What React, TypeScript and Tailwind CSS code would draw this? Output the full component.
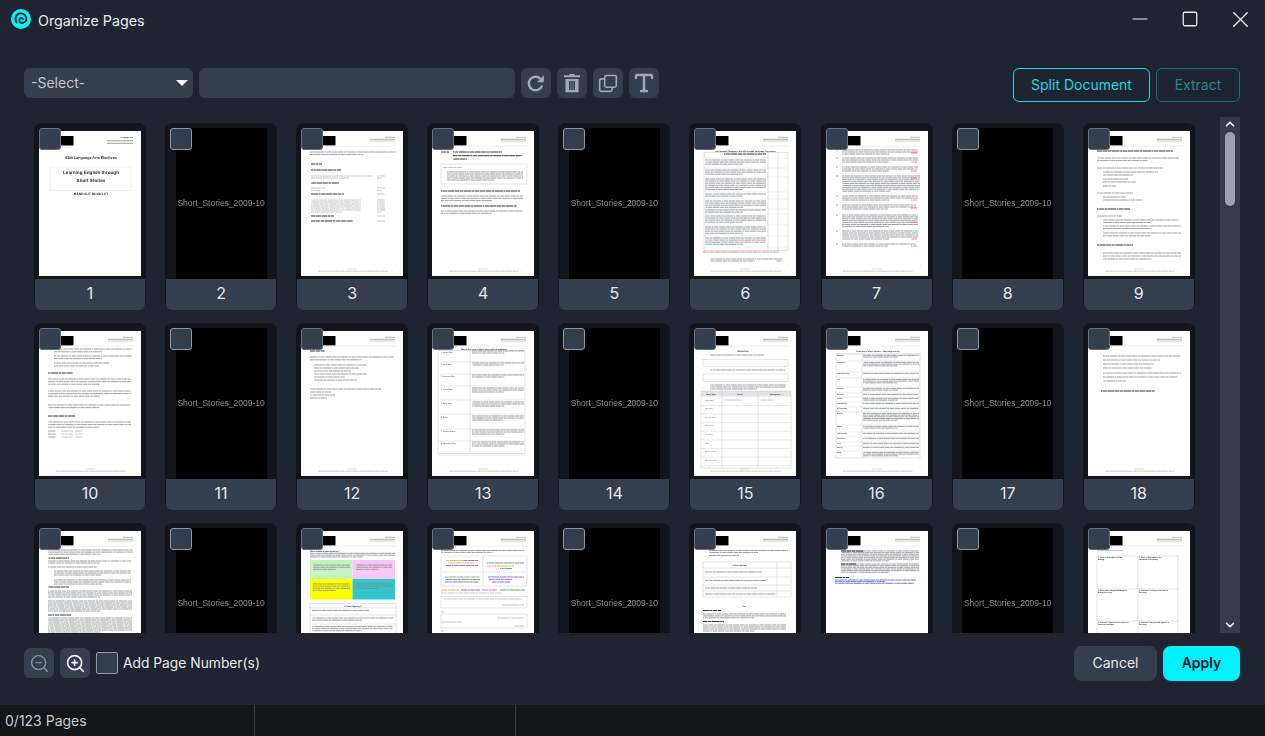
import { ReactNode } from "react";
import { ChevronDown, ChevronUp, Minus, Square, Type, X, ZoomIn, ZoomOut } from "lucide-react";

// greeked text lines for the page thumbnails, k: n normal, b bold, s small, r red
const STROKES: Record<string, [string, number]> = {
  n: ["#85878c", 0.78],
  b: ["#2b2d31", 0.95],
  s: ["#a3a6ab", 0.65],
  r: ["#d9534f", 0.7],
  o: ["#e59a3c", 0.8],
  v: ["#8a4fd0", 0.8],
  g: ["#3f9a4a", 0.8],
  u: ["#4a62c9", 0.8],
  k: ["#d848c8", 0.8],
};

function l(y: number, a: number, b: number, k = "n") {
  const [color, width] = STROKES[k];
  return (
    <line
      x1={a}
      x2={b}
      y1={y}
      y2={y}
      stroke={color}
      strokeWidth={width}
      strokeDasharray="5 .5 3 .5 8 .5 2 .5 4.5 .5 6 .5"
      strokeDashoffset={(y * 7.3) % 30}
    />
  );
}

function p(y: number, a: number, b: number, n: number, step = 2.2, k = "n") {
  return Array.from({ length: n }, (_, i) => <g key={i}>{l(y + i * step, a, i === n - 1 && n > 1 ? a + (b - a) * 0.62 : b, k)}</g>);
}

function box(x: number, y: number, w: number, h: number, stroke = "#c8cacd", fill = "none") {
  return <rect x={x} y={y} width={w} height={h} fill={fill} stroke={stroke} strokeWidth={0.5} />;
}

function t(x: number, y: number, text: string, size = 2.2, weight = 400, anchor: "start" | "middle" | "end" = "start", color = "#2c2e32") {
  return (
    <text x={x} y={y} fontSize={size} fontWeight={weight} textAnchor={anchor} fill={color} fontFamily="'Liberation Sans', sans-serif" textRendering="geometricPrecision">
      {text}
    </text>
  );
}

function head() {
  return (
    <>
      <rect x={22} y={5} width={12.5} height={9.5} fill="#000" />
      <line x1={84} x2={94} y1={6.3} y2={6.3} stroke="#8b8d91" strokeWidth={0.6} />
      <line x1={69} x2={94} y1={8.3} y2={8.3} stroke="#8b8d91" strokeWidth={0.7} />
      <line x1={69} x2={94} y1={10} y2={10} stroke="#a3a6ab" strokeWidth={0.6} />
      <line x1={9} x2={95} y1={15} y2={15} stroke="#e2e3e5" strokeWidth={0.6} />
    </>
  );
}

function foot() {
  return (
    <>
      <line x1={46} x2={56} y1={138} y2={138} stroke="#b5b7ba" strokeWidth={0.5} />
      <line x1={17} x2={87} y1={140.2} y2={140.2} stroke="#a3a6ab" strokeWidth={0.6} strokeDasharray="3 .4 2 .4" />
      <line x1={94} x2={95} y1={135} y2={135} stroke="#c8cacd" strokeWidth={0.6} />
    </>
  );
}

const BOOK_PAGE = (
  <>
    <rect x={22} y={5} width={12.5} height={9.5} fill="#000" />
    {t(94, 7, "Language Arts", 1.8, 700, "end")}
    <line x1={68} x2={94} y1={9.8} y2={9.8} stroke="#6f7175" strokeWidth={0.7} />
    <line x1={68} x2={94} y1={12.3} y2={12.3} stroke="#6f7175" strokeWidth={0.7} />
    {t(52, 28.3, "EDB Language Arts Electives", 3.7, 700, "middle")}
    {box(11, 36, 81, 23.5, "#dcdde0")}
    {t(52, 42.5, "Learning English through", 4.6, 700, "middle")}
    {t(52, 50.5, "Short Stories", 4.6, 700, "middle")}
    {t(52, 63.8, "HANDOUT BOOKLET", 3.4, 700, "middle")}
  </>
);

const CONTENTS = (
  <>
    {head()}
    {p(21, 9, 95, 2, 2.4)}
    {l(33, 10, 21, "b")}
    {l(39, 10, 40, "b")}
    {p(45, 10, 72, 2, 2, "s")}
    {p(45, 76, 84, 2, 2, "s")}
    {l(52, 10, 38, "b")}
    {p(57, 10, 25, 2, 2.6, "s")}
    {p(57, 76, 84, 2, 2.6, "s")}
    {l(63, 10, 43, "b")}
    {l(63, 76, 84, "s")}
    {p(69, 10, 60, 7, 2, "s")}
    {p(69, 76, 84, 7, 2, "s")}
    {l(85, 10, 33, "b")}
    {l(85, 76, 84, "s")}
    {l(90, 10, 52, "b")}
    {l(90, 76, 84, "s")}
    {foot()}
  </>
);

const PART_ONE = (
  <>
    {head()}
    {l(21, 9, 17, "b")}
    {l(21, 21, 70, "b")}
    {l(24.7, 21, 90, "b")}
    {l(28, 21, 35, "b")}
    {box(9, 33, 86, 20)}
    {l(36.5, 11, 30, "s")}
    {p(41, 15, 91, 5, 2)}
    {l(60, 9, 88, "b")}
    {p(65, 9, 91, 3, 2.3)}
    {l(75, 9, 85, "b")}
    {p(80, 9, 91, 2, 2.3)}
    {foot()}
  </>
);

const CURRICULUM = (
  <>
    {head()}
    {t(51, 20.6, "The Personal Changes in the NSS English Language Curriculum", 2, 700, "middle")}
    {box(10, 21.5, 84, 98)}
    <line x1={74} x2={74} y1={21.5} y2={119.5} stroke="#c8cacd" strokeWidth={0.5} />
    <line x1={84} x2={84} y1={21.5} y2={119.5} stroke="#c8cacd" strokeWidth={0.5} />
    {[27, 37, 46, 61, 68, 78, 83, 94, 105, 116].map((y) => (
      <line key={y} x1={10} x2={94} y1={y} y2={y} stroke="#d2d4d7" strokeWidth={0.4} />
    ))}
    {l(23, 30, 72, "b")}
    {p(29, 11, 72, 3, 2.1)}
    {p(39, 11, 72, 3, 2.1)}
    {p(48, 11, 72, 6, 2.1)}
    {p(63, 11, 72, 2, 2.1)}
    {p(70, 11, 72, 4, 2.1)}
    {p(79, 11, 72, 2, 2.1)}
    {p(85, 11, 72, 4, 2.1)}
    {p(96, 11, 72, 4, 2.1)}
    {p(107, 11, 72, 4, 2.1)}
    {l(121, 9, 85, "r")}
    {p(128, 16, 88, 2, 2)}
    {l(130, 82, 88, "r")}
    {foot()}
  </>
);

const NUMBERED = (
  <>
    {head()}
    {[19, 27, 36, 45, 65, 74, 84, 100, 113].map((y) => (
      <g key={y}>{l(y, 10, 12)}</g>
    ))}
    {p(19, 16, 92, 3, 2)}
    {p(27, 16, 92, 3, 2)}
    {p(36, 16, 92, 3, 2)}
    {p(45, 16, 94, 9, 1.9)}
    {p(65, 16, 92, 3, 2)}
    {p(74, 16, 90, 3, 2)}
    {p(84, 16, 92, 7, 1.9)}
    {p(100, 16, 92, 5, 2)}
    {p(113, 16, 90, 2, 2)}
    {[22, 31, 40, 47, 69, 77, 91, 108, 115].map((y) => (
      <g key={y}>{l(y, 85, 91, "r")}</g>
    ))}
    {foot()}
  </>
);

const OBJECTIVES = (
  <>
    {head()}
    {l(20, 9, 85, "b")}
    {p(27, 9, 91, 2, 2.6)}
    {l(37, 9, 75)}
    {p(41, 15, 70, 1)}
    {l(44, 15, 45)}
    {l(48, 15, 40)}
    {l(51, 15, 48)}
    {l(55, 15, 28)}
    {l(62, 9, 45)}
    {l(66, 15, 38)}
    {l(69, 15, 55)}
    {l(78, 9, 42, "b")}
    {l(85, 9, 34)}
    {p(89, 15, 91, 2, 2.5)}
    {p(95, 15, 93, 2, 2.5)}
    {p(102, 15, 93, 2, 2.8)}
    {l(114, 9, 45, "b")}
    {p(122, 15, 93, 3, 3)}
    {foot()}
  </>
);

const CONTENT_MODULE = (
  <>
    {head()}
    {p(18, 15, 93, 2, 2.8)}
    {p(25, 15, 93, 2, 2.6)}
    {l(32, 15, 70)}
    {l(35, 15, 60)}
    {l(42, 9, 34, "b")}
    {p(48, 9, 92, 3, 2.6)}
    {p(60, 9, 92, 3, 2.6)}
    {p(74, 9, 92, 2, 2.6)}
    {l(85, 9, 36, "b")}
    {p(91, 9, 92, 3, 2.6)}
    {[100, 103, 106].map((y) => (
      <g key={y}>
        {l(y, 9, 17)}
        {l(y, 22, 34, "s")}
        {l(y, 36, 44, "s")}
      </g>
    ))}
    {foot()}
  </>
);

const ASSESSMENT = (
  <>
    {head()}
    {l(20, 9, 24, "b")}
    {p(26, 9, 93, 2, 2.8)}
    {[34, 37, 40, 43, 46, 49].map((y, i) => (
      <g key={y}>{l(y, 13, [65, 58, 50, 66, 44, 56][i])}</g>
    ))}
    {l(58, 9, 80)}
    {l(61, 9, 30)}
    {l(64, 9, 34)}
    {l(67, 9, 26)}
    {foot()}
  </>
);

const MATCHING_ROWS: [string, number, number][] = [
  ["1. Horror Story", 20, 8],
  ["2. Love Story", 32, 8],
  ["3. Detective Story", 44, 8],
  ["4. Ghost Story", 57, 9],
  ["5. Fairy Story", 71, 9],
  ["6. Fable", 85, 10],
  ["7. Science Fiction", 99, 8],
  ["8. Adventure Story", 111, 10],
];

const MATCHING = (
  <>
    {head()}
    {t(52, 18.5, "Match the type of short story with its methods", 2.1, 700, "middle")}
    {box(6, 19.5, 87, 103)}
    <line x1={38} x2={38} y1={19.5} y2={122.5} stroke="#c8cacd" strokeWidth={0.5} />
    {MATCHING_ROWS.map(([name, y, h], i) => (
      <g key={name}>
        {t(9, y + 1.5, name, 1.8)}
        {p(y, 40, 92, i > 2 ? 3 : 2, 2, "n")}
        <line x1={6} x2={93} y1={y + h + 3} y2={y + h + 3} stroke="#c8cacd" strokeWidth={0.4} />
      </g>
    ))}
    {foot()}
  </>
);

const REFLECTION_ROWS = ["Horror Story", "Love Story", "Detective Story", "Ghost Story", "Fairy Story", "Fable", "Science Fiction", "Adventure Story"];

const REFLECTION = (
  <>
    {head()}
    {t(49, 21, "Reflection", 2.3, 700, "middle")}
    {l(24, 16, 70)}
    {box(9, 28.5, 85, 7)}
    {l(39, 16, 91)}
    {box(9, 43, 85, 7.5)}
    {p(54, 16, 92, 3, 2)}
    <rect x={7} y={60} width={90} height={5.5} fill="#e3e4e6" />
    {box(7, 60, 90, 77)}
    <line x1={28} x2={28} y1={60} y2={137} stroke="#c8cacd" strokeWidth={0.5} />
    <line x1={64} x2={64} y1={60} y2={137} stroke="#c8cacd" strokeWidth={0.5} />
    {t(17, 64, "Story Type", 1.9, 700, "middle")}
    {t(46, 64, "Locale", 1.9, 700, "middle")}
    {t(81, 64, "Atmosphere", 1.9, 700, "middle")}
    {REFLECTION_ROWS.map((name, i) => (
      <g key={name}>
        {t(11, 69.5 + i * 8.6, name, 1.6)}
        <line x1={7} x2={97} y1={74.5 + i * 8.6} y2={74.5 + i * 8.6} stroke="#c8cacd" strokeWidth={0.4} />
      </g>
    ))}
    {l(69, 30, 48, "s")}
    {l(69, 66, 80, "s")}
    {foot()}
  </>
);

const FEATURE_ROWS: [string, number, number][] = [
  ["Opening", 23, 2],
  ["Exposition", 30, 3],
  ["Characterisation", 41, 1],
  ["Plot", 47, 3],
  ["Dialogue", 56, 2],
  ["Narration", 62, 1],
  ["Section", 66, 2],
  ["Complication", 71, 1],
  ["Rising action", 76, 1],
  ["Conflict", 81, 5],
  ["Climax", 94, 2],
  ["Falling action", 101, 1],
  ["Resolution", 106, 1],
  ["Twist", 111, 1],
  ["Ending", 115, 1],
  ["Moral", 120, 3],
];

const FEATURES = (
  <>
    {head()}
    {t(52, 21, "Features of short stories – Matching activity", 2.1, 700, "middle")}
    {box(10, 23, 84, 104)}
    <line x1={36} x2={36} y1={23} y2={127} stroke="#c8cacd" strokeWidth={0.5} />
    {FEATURE_ROWS.map(([name, y, n]) => (
      <g key={name}>
        {t(11, y + 2, name, 1.6, 700)}
        {p(y + 1.4, 37, 93, n, 1.7)}
        <line x1={10} x2={94} y1={y} y2={y} stroke="#c8cacd" strokeWidth={0.4} />
      </g>
    ))}
    {foot()}
  </>
);

const ACTIVITIES = (
  <>
    {head()}
    {l(18, 10, 19)}
    {p(25, 15, 93, 1)}
    {l(29, 15, 72)}
    {l(33, 15, 66)}
    {l(37, 15, 64)}
    {l(42, 15, 93)}
    {l(46, 15, 90)}
    {l(50, 15, 38)}
    {l(60, 13, 67, "b")}
    {foot()}
  </>
);

const SPEECH = (
  <>
    {head()}
    {p(19, 9, 94, 3, 2.1)}
    {l(27, 9, 30, "b")}
    {p(30, 9, 92, 2, 2)}
    {l(36, 9, 58)}
    {p(40, 15, 92, 3, 2)}
    {p(49, 15, 92, 3, 2)}
    {l(56, 9, 30, "b")}
    {p(60, 9, 93, 4, 2)}
    {p(70, 9, 93, 6, 2)}
    {l(84, 9, 32, "b")}
    {p(87, 9, 93, 8, 2)}
  </>
);

const GOOD_OPENING = (
  <>
    {head()}
    {t(9, 20.5, "What makes a good opening?", 2.1, 700)}
    {p(22.3, 9, 94, 3, 1.8)}
    <rect x={9} y={29} width={42.5} height={19} fill="#c6f2c0" />
    <rect x={51.5} y={29} width={42.5} height={19} fill="#f8c8f4" />
    <rect x={9} y={48} width={42.5} height={20.5} fill="#ffff00" />
    <rect x={51.5} y={48} width={42.5} height={20.5} fill="#33c6cc" />
    {p(34, 12, 49, 3, 2.2, "n")}
    {p(34, 55, 91, 3, 2.2, "n")}
    {p(53, 12, 49, 4, 2.2, "n")}
    {p(53, 55, 91, 3, 2.2, "n")}
    {box(9, 72.5, 86, 30)}
    {t(52, 75.5, "A Good Opening?", 2.1, 700, "middle")}
    {[77, 84, 93].map((y) => (
      <line key={y} x1={9} x2={95} y1={y} y2={y} stroke="#c8cacd" strokeWidth={0.5} />
    ))}
    {l(79.5, 11, 68)}
    {p(87, 11, 92, 2, 2.1)}
    {p(95.5, 11, 92, 3, 2.1)}
  </>
);

const COLOURED = (
  <>
    {head()}
    {p(19.5, 9, 92, 2, 1.9)}
    {box(9, 25, 86, 30)}
    <line x1={51} x2={51} y1={25} y2={55} stroke="#c8cacd" strokeWidth={0.5} />
    <line x1={9} x2={95} y1={41} y2={41} stroke="#c8cacd" strokeWidth={0.5} />
    {l(29.5, 14, 32, "o")}
    {l(29.5, 32, 46, "v")}
    {l(32, 16, 42, "o")}
    {l(34.5, 14, 46, "v")}
    {l(32, 55, 92, "g")}
    {l(35, 55, 82, "o")}
    {l(37.5, 68, 80, "g")}
    {l(46, 13, 48)}
    {l(48.5, 13, 48, "g")}
    {l(51, 13, 46, "u")}
    {l(46, 56, 92, "u")}
    {l(48.5, 56, 80, "k")}
    {l(51, 60, 78, "u")}
    {l(59, 9, 27, "o")}
    {l(59, 29, 48, "v")}
    {l(59, 50, 65, "k")}
    {l(59, 68, 93, "g")}
    {l(62, 9, 70, "s")}
    {box(9, 65.5, 86, 11.5)}
    {l(68, 11, 90, "s")}
    {l(74, 70, 92, "s")}
    {l(81, 9, 12, "s")}
    {box(9, 83, 86, 14)}
    {l(87, 65, 92, "s")}
    {l(91, 9, 30, "s")}
    {l(95, 82, 92, "s")}
    {l(100, 9, 12, "s")}
  </>
);

const OPENING_TABLE = (
  <>
    {head()}
    {p(19.5, 15, 94, 2, 2)}
    {l(24.5, 15, 45)}
    {box(9, 31, 88, 35)}
    <line x1={83} x2={83} y1={31} y2={66} stroke="#c8cacd" strokeWidth={0.5} />
    {[37, 46, 54, 60].map((y) => (
      <line key={y} x1={9} x2={97} y1={y} y2={y} stroke="#c8cacd" strokeWidth={0.5} />
    ))}
    {t(46, 35, "A Good Ending?", 1.9, 700, "middle")}
    {l(41, 11, 68)}
    {l(49.5, 11, 72)}
    {l(57, 11, 63)}
    {l(63, 11, 82)}
    {t(50, 76, "Text", 1.8, 700, "middle")}
    {l(79.5, 9, 27, "b")}
    {p(83, 9, 92, 3, 1.9)}
    {l(90.5, 9, 30, "b")}
    {p(94, 9, 92, 4, 2)}
  </>
);

const TECHNOLOGY = (
  <>
    {head()}
    {p(20, 15, 93, 7, 1.65)}
    {l(20, 15, 38, "b")}
    {p(33, 15, 93, 6, 1.65)}
    {l(33, 15, 30, "b")}
    {l(46.5, 9, 23, "b")}
    {p(49, 9, 90, 2, 1.6, "u")}
    {l(52.3, 9, 88, "u")}
  </>
);

const STORY_TASKS: [number, number, string, string][] = [
  [10, 27, "1. Write a description of the", "setting."],
  [51, 27, "2. Write a description of a", "character in the story."],
  [10, 60, "3. Write three things that happen", "during the story."],
  [51, 60, "4. Choose 3 verbs you can use in", "the story."],
  [10, 92, "5. Choose 3 adjectives we learnt in", "class for the story."],
  [51, 92, "6. Choose 3 objects that appear in", "the story."],
];

const STORY_PLAN = (
  <>
    {head()}
    {l(19.5, 9, 36, "s")}
    {box(9, 25, 81, 90)}
    <line x1={50} x2={50} y1={25} y2={115} stroke="#c8cacd" strokeWidth={0.5} />
    <line x1={9} x2={90} y1={58} y2={58} stroke="#c8cacd" strokeWidth={0.5} />
    <line x1={9} x2={90} y1={90} y2={90} stroke="#c8cacd" strokeWidth={0.5} />
    {STORY_TASKS.map(([x, y, a, b]) => (
      <g key={a}>
        {t(x, y, a, 1.85, 700)}
        {t(x, y + 2.3, b, 1.85, 700)}
      </g>
    ))}
  </>
);

// null is a blank page that only holds the watermark
const PAGES: (ReactNode | null)[] = [
  BOOK_PAGE, null, CONTENTS, PART_ONE, null, CURRICULUM, NUMBERED, null, OBJECTIVES,
  CONTENT_MODULE, null, ASSESSMENT, MATCHING, null, REFLECTION, FEATURES, null, ACTIVITIES,
  SPEECH, null, GOOD_OPENING, COLOURED, null, OPENING_TABLE, TECHNOLOGY, null, STORY_PLAN,
];

function Logo() {
  return (
    <svg viewBox="0 0 20 20" className="h-5 w-5 shrink-0">
      <circle cx="10" cy="10" r="10" fill="#0ff0f5" />
      <path
        d="M5.6 13.4C3 10 5 4.6 9.6 4.4c3.8-.2 6.6 3.2 5.6 6.6-.7 2.6-3.8 3.8-5.8 2.4-1.6-1.1-1.5-3.6.3-4.3 1.2-.4 2.4.3 2.4 1.3"
        fill="none"
        stroke="#10343f"
        strokeWidth="1.9"
        strokeLinecap="round"
      />
    </svg>
  );
}

function ToolButton({ children }: { children: ReactNode }) {
  return <div className="flex h-[30px] w-[30px] items-center justify-center rounded-md bg-[#343e4c] text-[#a3a9b3]">{children}</div>;
}

function Thumb({ num, page }: { num: number; page: ReactNode | null }) {
  return (
    <div className="relative flex h-[187px] w-[112px] flex-col rounded-lg bg-[#12161c]">
      {page === null ? (
        <div className="mx-auto mt-[5px] flex h-[151px] w-[91px] items-center justify-center bg-black">
          <span className="font-['Liberation_Sans',sans-serif] text-[8.5px] whitespace-nowrap text-[#8f8f8f] blur-[0.2px]">Short_Stories_2009-10</span>
        </div>
      ) : (
        <div className="mx-auto mt-2 h-[145px] w-[102px] overflow-hidden bg-white">
          <svg viewBox="0 0 102 145" className="block h-full w-full blur-[0.25px]">
            {page}
          </svg>
        </div>
      )}
      <div className={`mx-px flex h-[31px] items-center justify-center rounded-b-md bg-[#343e4c] pb-[3px] text-base text-[#e5e7eb] ${page === null ? "" : "mt-[3px]"}`}>{num}</div>
      <div className={`absolute top-[5px] left-[5px] h-[22px] w-[22px] rounded-[3px] border bg-[#343e4c] ${page === null ? "border-[#8f97a3]" : "border-[#667080]"}`} />
    </div>
  );
}

export default function App() {
  return (
    <div className="flex h-[736px] w-[1265px] flex-col overflow-hidden bg-[#1f2530] font-['Inter',sans-serif]">
      {/* title bar */}
      <div className="flex h-[38px] items-center pl-[11px]">
        <Logo />
        <span className="mt-1 ml-[7px] text-[14.3px] text-[#e9ebee]">Organize Pages</span>
        <div className="ml-auto flex items-center text-[#eceef1]">
          <div className="flex w-[50px] justify-center">
            <Minus className="h-6 w-6" strokeWidth={1.2} />
          </div>
          <div className="flex w-[50px] justify-center">
            <Square className="h-[18px] w-[18px]" strokeWidth={1.7} />
          </div>
          <div className="flex w-[50px] justify-center">
            <X className="h-[27px] w-[27px]" strokeWidth={1.2} />
          </div>
        </div>
      </div>

      {/* toolbar */}
      <div className="mt-[30px] flex items-start pr-[25px] pl-6">
        <div className="flex h-[30px] w-[169px] items-center justify-between rounded-md bg-[#343e4c] pr-[5px] pl-[7px] text-sm text-[#c3c7cd]">
          -Select-
          <svg viewBox="0 0 12 6" className="h-[6px] w-3">
            <path d="M0 0h12L6 6z" fill="#f3f4f6" />
          </svg>
        </div>
        <div className="ml-[6px] h-[30px] w-[316px] rounded-md bg-[#343e4c]" />
        <div className="ml-[6px] flex gap-[6px]">
          <ToolButton>
            <svg viewBox="0 0 24 24" className="h-[22px] w-[22px]">
              <path d="M18.6 14.8a7.4 7.4 0 1 1-1.9-7.6" fill="none" stroke="currentColor" strokeWidth="2.6" />
              <path d="M20.5 3.5v7.6h-7.6z" fill="currentColor" />
            </svg>
          </ToolButton>
          <ToolButton>
            <svg viewBox="0 0 24 24" className="h-6 w-6">
              <path d="M9 4.2 9.8 3h4.4l.8 1.2H20v2H4v-2z" fill="currentColor" />
              <path d="M5.5 8h13v13.2H5.5zM9 10v9h1.6v-9zm2.2 0v9h1.6v-9zm2.2 0v9H15v-9z" fill="currentColor" fillRule="evenodd" />
            </svg>
          </ToolButton>
          <ToolButton>
            <svg viewBox="0 0 24 24" className="h-5 w-5" fill="none" stroke="currentColor" strokeWidth="1.9">
              <rect x="8" y="3" width="14" height="14" rx="2" />
              <path d="M8 7H4a2 2 0 0 0-2 2v11a2 2 0 0 0 2 2h11a2 2 0 0 0 2-2v-3" />
            </svg>
          </ToolButton>
          <ToolButton>
            <Type className="h-6 w-6" strokeWidth={2.4} />
          </ToolButton>
        </div>
        <div className="ml-auto flex gap-[6px]">
          <div className="flex h-[34px] w-[137px] items-center justify-center rounded-md border border-[#22d3e0] text-sm text-[#22d3e0]">Split Document</div>
          <div className="flex h-[34px] w-[84px] items-center justify-center rounded-md border border-[#1a6c75] text-sm text-[#27838c]">Extract</div>
        </div>
      </div>

      {/* pages */}
      <div className="mt-[15px] flex min-h-0 flex-1 pr-[25px] pl-[34px]">
        <div className="min-w-0 flex-1 overflow-hidden pt-[6px]">
          <div className="grid grid-cols-[repeat(9,112px)] gap-x-[19.1px] gap-y-[13px]">
            {PAGES.map((page, i) => (
              <Thumb key={i} num={i + 1} page={page} />
            ))}
          </div>
        </div>
        <div className="flex w-5 flex-col items-center bg-[#343c49] text-[#eceef1]">
          <ChevronUp className="h-[14px] w-[14px]" strokeWidth={3} />
          <div className="mt-px h-[74px] w-[10px] rounded-full bg-[#9ca3af]" />
          <ChevronDown className="mt-auto mb-[1px] h-[14px] w-[14px]" strokeWidth={3} />
        </div>
      </div>

      {/* footer actions */}
      <div className="mb-3 flex h-[60px] shrink-0 items-center pr-[25px] pl-6">
        <div className="flex h-[30px] w-[30px] items-center justify-center rounded-md bg-[#343e4c] text-[#858c97]">
          <ZoomOut className="h-[21px] w-[21px]" strokeWidth={1.7} />
        </div>
        <div className="ml-[6px] flex h-[30px] w-[30px] items-center justify-center rounded-md bg-[#343e4c] text-[#eceef1]">
          <ZoomIn className="h-[21px] w-[21px]" strokeWidth={1.9} />
        </div>
        <div className="ml-[6px] h-[22px] w-[22px] rounded-[2px] border border-[#8f97a3] bg-[#343e4c]" />
        <span className="ml-[5px] text-[13.8px] text-[#e9ebee]">Add Page Number(s)</span>
        <div className="ml-auto flex gap-[6px]">
          <div className="flex h-[35px] w-[83px] items-center justify-center rounded-lg bg-[#343e4c] text-sm text-[#e5e7eb]">Cancel</div>
          <div className="flex h-[35px] w-[77px] items-center justify-center rounded-lg bg-[#00f0ff] text-sm font-semibold text-[#111827]">Apply</div>
        </div>
      </div>

      {/* status bar */}
      <div className="flex h-[31px] shrink-0 items-center bg-[#12161b] text-sm text-[#c6c9ce]">
        <div className="flex h-full w-[255px] items-center border-r border-[#343c49] pl-[5px]">0/123 Pages</div>
        <div className="h-full w-[261px] border-r border-[#343c49]" />
      </div>
    </div>
  );
}
